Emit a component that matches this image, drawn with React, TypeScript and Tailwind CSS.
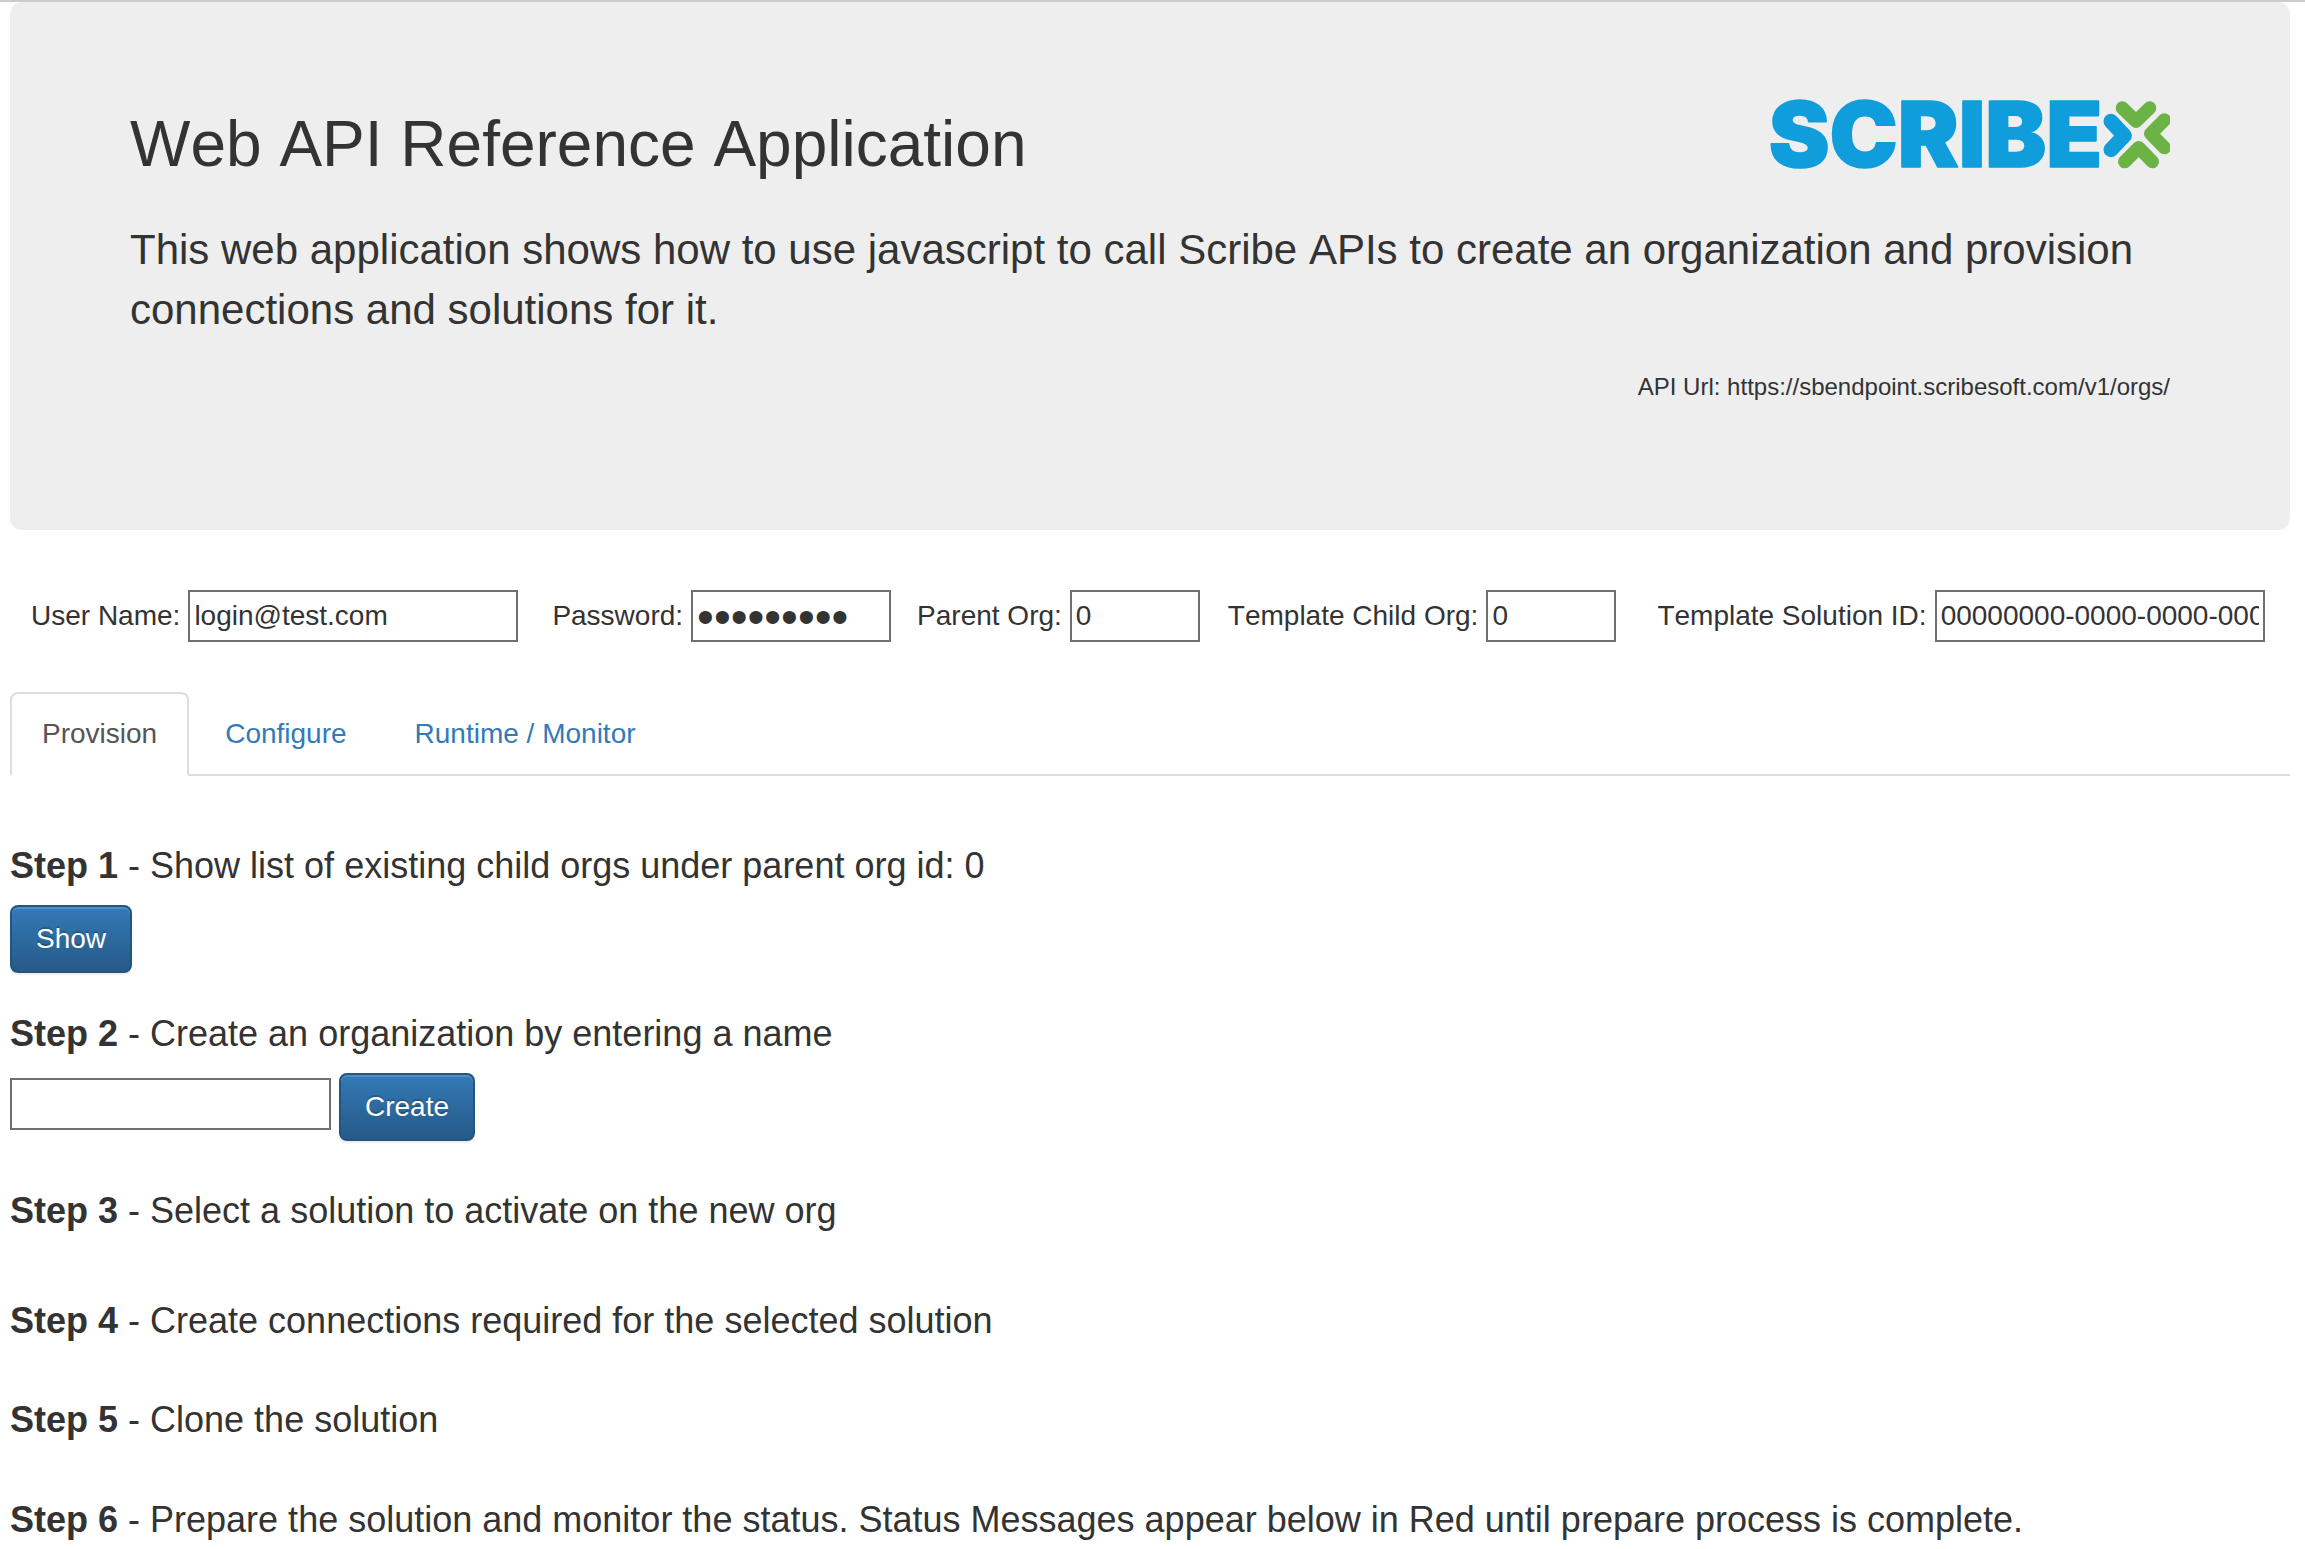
import { useState } from "react";
import type { ReactNode } from "react";

const TABS = ["Provision", "Configure", "Runtime / Monitor"];

const inputClass = "h-[52px] border-2 border-[#707070] bg-white px-1 leading-[40px] outline-none";

function ScribeLogo() {
    return (
        <svg viewBox="0 57 1200 213" className="h-[71px] w-[400px] shrink-0 overflow-visible" role="img" aria-label="Scribe">
            <clipPath id="markClip">
                <rect x="990" y="57" width="210" height="213" />
            </clipPath>
            <text
                x="-4"
                y="262"
                fontFamily="Inter, sans-serif"
                fontWeight="900"
                fontSize="274"
                fill="#109ddb"
                stroke="#109ddb"
                strokeWidth="5"
                strokeLinejoin="round"
            >
                SCRIBE
            </text>
            <g fill="none" strokeLinecap="round" strokeLinejoin="round" clipPath="url(#markClip)">
                <path d="M1023 124 L1063 167 L1023 209" stroke="#109ddb" strokeWidth="45" />
                <g stroke="#6bb345" strokeWidth="40">
                    <path d="M1057 84 L1098 124 L1139 84" />
                    <path d="M1183 120 L1142 161 L1183 203" />
                    <path d="M1064 245 L1106 203 L1147 245" />
                </g>
            </g>
        </svg>
    );
}

type FieldProps = {
    id: string;
    label: string;
    value: string;
    onChange: (value: string) => void;
    type?: string;
    className?: string;
};

function Field({ id, label, value, onChange, type = "text", className = "" }: FieldProps) {
    return (
        <div className="flex items-center gap-2">
            <label htmlFor={id} className="whitespace-nowrap">{label}</label>
            <input
                id={id}
                type={type}
                value={value}
                onChange={(e) => onChange(e.target.value)}
                className={`${inputClass} ${className}`}
            />
        </div>
    );
}

function PrimaryButton({ children }: { children: ReactNode }) {
    return (
        <button
            type="button"
            className="h-[68px] rounded-lg border-2 border-[#245580] bg-linear-to-b from-[#337ab7] to-[#265a88] px-6 leading-[40px] text-white shadow-[inset_0_2px_0_rgba(255,255,255,0.15),0_2px_2px_rgba(0,0,0,0.075)] text-shadow-[0_-2px_0_rgba(0,0,0,0.2)]"
        >
            {children}
        </button>
    );
}

function Step({ number, children }: { number: number; children: ReactNode }) {
    return (
        <h4 className="text-[36px] leading-[40px]">
            <b>Step {number}</b> - {children}
        </h4>
    );
}

export default function App() {
    const [activeTab, setActiveTab] = useState(TABS[0]);
    const [userName, setUserName] = useState("login@test.com");
    const [password, setPassword] = useState("password1");
    const [parentOrg, setParentOrg] = useState("0");
    const [childOrg, setChildOrg] = useState("0");
    const [solutionId, setSolutionId] = useState("00000000-0000-0000-0000-000000000000");
    const [orgName, setOrgName] = useState("");

    return (
        <div className="border-t-2 border-[#cccccc] bg-white pr-[15px] pl-[10px] font-['Liberation_Sans',Arial,sans-serif] text-[28px] leading-[40px] text-[#333333] [font-kerning:none]">
            <header className="rounded-xl bg-[#eeeeee] px-[120px] pt-[97px] pb-[126px]">
                <div className="flex items-start justify-between">
                    <h1 className="mt-[10px] text-[64px] leading-[70px]">Web API Reference Application</h1>
                    <ScribeLogo />
                </div>
                <p className="mt-[41px] text-[42px] leading-[60px]">
                    This web application shows how to use javascript to call Scribe APIs to create an organization and provision connections and solutions for it.
                </p>
                <p className="mt-[30px] text-right text-[24px] leading-[34px]">
                    API Url: https://sbendpoint.scribesoft.com/v1/orgs/
                </p>
            </header>

            <form className="mt-[60px] flex items-center pl-[21px]">
                <Field id="userName" label="User Name:" value={userName} onChange={setUserName} className="w-[330px]" />
                <div className="ml-[34px]">
                    <Field
                        id="password"
                        label="Password:"
                        type="password"
                        value={password}
                        onChange={setPassword}
                        className="w-[200px] text-[48px]"
                    />
                </div>
                <div className="ml-[26px]">
                    <Field id="parentOrg" label="Parent Org:" value={parentOrg} onChange={setParentOrg} className="w-[130px]" />
                </div>
                <div className="ml-7">
                    <Field id="childOrg" label="Template Child Org:" value={childOrg} onChange={setChildOrg} className="w-[130px]" />
                </div>
                <div className="ml-[41px]">
                    <Field id="solutionId" label="Template Solution ID:" value={solutionId} onChange={setSolutionId} className="w-[330px]" />
                </div>
            </form>

            <nav className="mt-[50px] flex gap-1 border-b-2 border-[#dddddd]">
                {TABS.map((tab) => (
                    <a
                        key={tab}
                        href="#"
                        onClick={(e) => {
                            e.preventDefault();
                            setActiveTab(tab);
                        }}
                        className={`-mb-0.5 rounded-t-lg border-2 px-[30px] py-5 ${
                            tab === activeTab
                                ? "border-[#dddddd] border-b-white bg-white text-[#555555]"
                                : "border-transparent text-[#337ab7]"
                        }`}
                    >
                        {tab}
                    </a>
                ))}
            </nav>

            <main className="pt-[70px]">
                <section className="mb-[41px] flex flex-col items-start gap-[19px]">
                    <Step number={1}>Show list of existing child orgs under parent org id: {parentOrg}</Step>
                    <PrimaryButton>Show</PrimaryButton>
                </section>

                <section className="mb-[50px] flex flex-col items-start gap-[19px]">
                    <Step number={2}>Create an organization by entering a name</Step>
                    <div className="flex items-center gap-2">
                        <input
                            type="text"
                            aria-label="Organization name"
                            value={orgName}
                            onChange={(e) => setOrgName(e.target.value)}
                            className={`${inputClass} mb-1.5 w-[321px]`}
                        />
                        <PrimaryButton>Create</PrimaryButton>
                    </div>
                </section>

                <section className="mb-[70px]">
                    <Step number={3}>Select a solution to activate on the new org</Step>
                </section>
                <section className="mb-[59px]">
                    <Step number={4}>Create connections required for the selected solution</Step>
                </section>
                <section className="mb-[60px]">
                    <Step number={5}>Clone the solution</Step>
                </section>
                <section>
                    <Step number={6}>
                        Prepare the solution and monitor the status. Status Messages appear below in Red until prepare process is complete.
                    </Step>
                </section>
            </main>
        </div>
    );
}
